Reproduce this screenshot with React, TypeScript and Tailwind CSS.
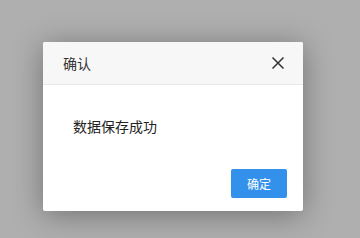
import React from "react";

export default function App() {
  const font = { fontFamily: '"Noto Sans CJK SC", "Noto Sans", sans-serif' };
  return (
    <div className="w-[360px] h-[238px] bg-[#afafaf] overflow-hidden flex items-start" style={font}>
      <div className="ml-[43px] mt-[42px] w-[260px] h-[169px] bg-white rounded-[2px] shadow-[0_4px_30px_rgba(0,0,0,0.35)] flex flex-col overflow-hidden">
        <div className="h-[43px] bg-[#f7f7f7] border-b border-[#e8e8e8] flex items-center justify-between pl-[20px] pr-[18px] shrink-0">
          <span className="text-[14px] leading-[20px] text-[#333]">确认</span>
          <svg width="14" height="14" viewBox="0 0 14 14" className="text-[#333]">
            <path d="M1.5 1.5 L12.5 12.5 M12.5 1.5 L1.5 12.5" stroke="currentColor" strokeWidth="1.5" fill="none" />
          </svg>
        </div>
        <div className="flex-1 flex flex-col">
          <div className="pl-[30px] pt-[31px] text-[14px] leading-[20px] text-[#222]">数据保存成功</div>
          <div className="flex justify-end pr-[16px] mt-auto pb-[13px]">
            <button className="w-[56px] h-[29px] bg-[#3391eb] rounded-[2px] text-white text-[12px] leading-none">确定</button>
          </div>
        </div>
      </div>
    </div>
  );
}
